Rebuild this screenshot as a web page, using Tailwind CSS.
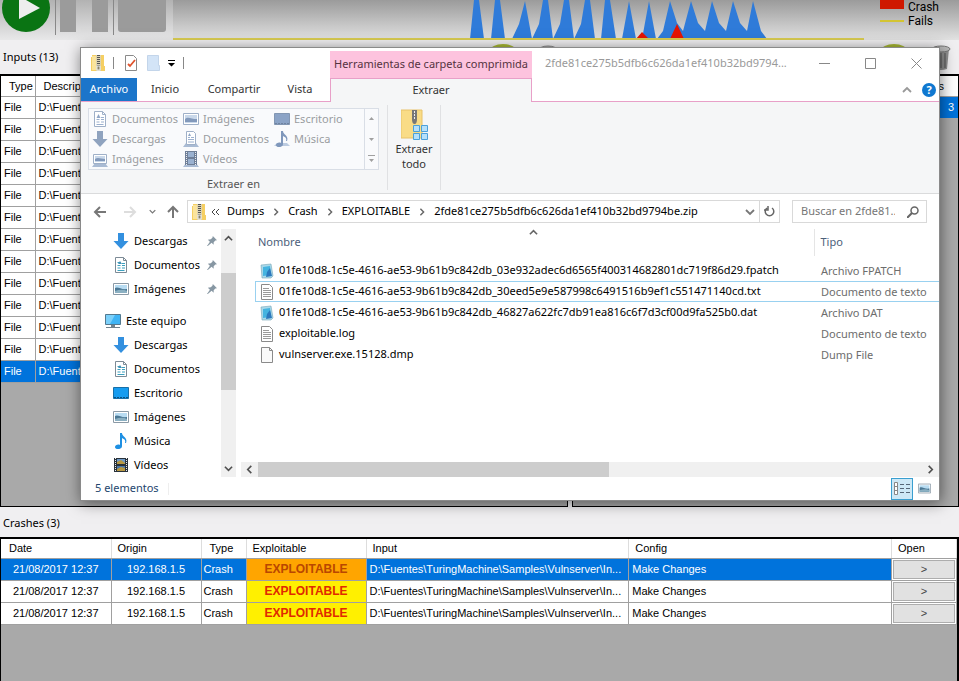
<!DOCTYPE html>
<html lang="es">
<head>
  <meta charset="UTF-8">
  <meta name="viewport" content="width=device-width, initial-scale=1.0">
  <title>TuringMachine</title>
  <script src="https://cdn.jsdelivr.net/npm/@tailwindcss/browser@4"></script>
</head>
<body class="relative flex h-screen flex-col overflow-hidden bg-[#f0eff1] font-['Liberation_Sans',sans-serif] text-[11px] text-black">

  <!-- Shared icons -->
  <svg class="hidden">
    <symbol id="zip" viewBox="0 0 14 16"><path d="M1 0h12v11h1v5H0V2h1z" fill="#f5cf63"/><path d="M1 1h4v14H1z" fill="#fbe49c"/><path d="M5 0h5v16H5z" fill="#ddd3b0"/><path d="M7.500 0v11" stroke="#555" stroke-width="3" stroke-dasharray="1 1"/><path d="M6 11h3v4H6z" fill="#8b8467" stroke="#eee"/></symbol>
    <symbol id="doc" viewBox="0 0 16 16"><path d="M2.500 .5h8l3 3v12h-11z" fill="#fff" stroke="#7d8b96"/><path d="M10.500 .5v3h3" fill="none" stroke="#7d8b96"/><path d="M4.500 8.500h3M4.500 5.500h3M9 6.500h3M9 8.500h3M4.500 11h3M9 11h3M4.500 13.500h7" stroke="#3ba0bf"/><path d="M5 7l2-3 2 3z" fill="#4591b5"/></symbol>
    <symbol id="down" viewBox="0 0 16 16"><path d="M5 0h6v8h4.500L8 16 .5 8H5z" fill="#3390df"/></symbol>
    <symbol id="pic" viewBox="0 0 16 16"><path d="M.5 2.500h15v11H.5z" fill="#fff" stroke="#8b9aa6"/><path d="M2 4h12v8H2z" fill="#b8dcf2"/><path d="M2 7c3-2 6 2 12 1v4H2z" fill="#4b7895"/><path d="M2 10c4-1 8-2 12 0v2H2z" fill="#8bb0c2"/></symbol>
    <symbol id="pc" viewBox="0 0 18 16"><path d="M1.500 1.500h15v10h-15z" fill="#3fb4f5" stroke="#53798f"/><path d="M2 2h9L6 11H2z" fill="#7bd0fa"/><path d="M7 12h4v2H7zM2 14h14v1H2z" fill="#71838e"/></symbol>
    <symbol id="desk" viewBox="0 0 16 16"><path d="M.5 2.500h15v11H.5z" fill="#169cf0" stroke="#176fa8"/><path d="M1 12.500h14" stroke="#075082" stroke-dasharray="2 1"/></symbol>
    <symbol id="note" viewBox="0 0 16 16"><path d="M7 0h2c0 4 6 4 4 10h-1c1-3-1-4-3-5v8c0 4-7 4-7 1 0-2 3-3 5-2z" fill="#1e90e3"/></symbol>
    <symbol id="film" viewBox="0 0 16 16"><path d="M1 1h14v14H1z" fill="#29323b"/><path d="M2.500 1v14M13.500 1v14" stroke="#eee" stroke-dasharray="1 1"/><path d="M4 2h8v5H4z" fill="#6f9ac7"/><path d="M4 9h8v5H4z" fill="#4b78ab"/><path d="M4 5l4-2 4 3v1H4zM4 12l4-2 4 1v3H4z" fill="#b79843"/></symbol>
    <symbol id="down-off" viewBox="0 0 16 16"><path d="M5 0h6v8h4.500L8 16 .5 8H5z" fill="#8fa3bf"/></symbol>
    <symbol id="desk-off" viewBox="0 0 16 16"><path d="M.5 2.500h15v11H.5z" fill="#8ba3c6" stroke="#8296b2"/><path d="M1 12.500h14" stroke="#6f83a0" stroke-dasharray="2 1"/></symbol>
    <symbol id="note-off" viewBox="0 0 16 16"><path d="M0 15l3-3h10l3 3z" fill="#bccbe0"/><path d="M7 0h2c0 4 6 4 4 10h-1c1-3-1-4-3-5v8c0 4-7 4-7 1 0-2 3-3 5-2z" fill="#7f97bb"/></symbol>
    <symbol id="film-off" viewBox="0 0 16 16"><path d="M0 16l3-4h10l3 4z" fill="#a9bbd4"/><path d="M2 0h12v14H2z" fill="#6f7f98"/><path d="M3.500 1v13M12.500 1v13" stroke="#eee" stroke-dasharray="1 1"/><path d="M5 1h6v5H5zM5 8h6v5H5z" fill="#9ab1d0"/></symbol>
    <symbol id="doc-off" viewBox="0 0 16 16"><path d="M2.500 .5h8l3 3v12h-11z" fill="#fff" stroke="#9fb0c8"/><path d="M10.500 .5v3h3" fill="none" stroke="#9fb0c8"/><path d="M4.500 8.500h3M9 6.500h3M9 8.500h3M4.500 11h3M9 11h3M4.500 13.500h7" stroke="#9bb0cf"/><path d="M4.500 7l2-4 2 4z" fill="#8fa5c5"/></symbol>
    <symbol id="docs-off" viewBox="0 0 16 16"><path d="M0 16l3-4h10l3 4z" fill="#a9bbd4"/><path d="M3.500 .5h7l2 2v11h-9z" fill="#fff" stroke="#9fb0c8"/><path d="M5 6.500h2M8 6.500h3M5 8.500h6M5 11h6" stroke="#9bb0cf"/><path d="M5 5l1.500-3L8 5z" fill="#8fa5c5"/></symbol>
    <symbol id="pic-off" viewBox="0 0 16 16"><path d="M.5 2.500h15v11H.5z" fill="#fff" stroke="#9fb0c8"/><path d="M2 4h12v8H2z" fill="#c9d8ea"/><path d="M2 8c3-3 6 0 12 0v3H2z" fill="#8299bb"/></symbol>
    <symbol id="pics-off" viewBox="0 0 16 16"><path d="M0 16l3-4h10l3 4z" fill="#a9bbd4"/><path d="M1.500 3.500h13v9h-13z" fill="#fff" stroke="#9fb0c8"/><path d="M3 5h10v6H3z" fill="#c9d8ea"/><path d="M3 8c3-2 6 0 10 0v2H3z" fill="#8299bb"/></symbol>
    <symbol id="pin" viewBox="0 0 12 12"><path d="M7 0l5 5-2 .5-2 2 0 3L5.500 8 1 12H0l3.500-5L1 4.500l3.500-.5 2-2z" fill="#8797a3"/></symbol>
    <symbol id="txt" viewBox="0 0 14 16"><path d="M1.500 .5h8l3 3v12h-11z" fill="#fff" stroke="#8a8a8a"/><path d="M3 4.500h6M3 6.500h8M3 8.500h8M3 10.500h8M3 12.500h8" stroke="#9a9a9a"/></symbol>
    <symbol id="blank" viewBox="0 0 14 16"><path d="M1.500 .5h8l3 3v12h-11z" fill="#fafafa" stroke="#8a8a8a"/><path d="M9.500 .5v3h3" fill="none" stroke="#8a8a8a"/></symbol>
    <symbol id="dat" viewBox="0 0 14 16"><path d="M1 2l10-1 2 12-2 2H2z" fill="#a9d9ea" stroke="#77a4b5" stroke-width=".6"/><path d="M3 4l7-1 1 9-8 1z" fill="#45b4e0"/><path d="M7 9l3-4 2 8-6 1z" fill="#2c79bd"/></symbol>
    <symbol id="chev" viewBox="0 0 10 10"><path d="M1 3l4 4 4-4" fill="none" stroke="currentColor" stroke-width="1.800"/></symbol>
  </svg>

  <!-- Toolbar and chart -->
  <header class="flex h-10 shrink-0 bg-linear-to-b from-[#9b9b9b] to-[#e2e2e2]">
    <div class="flex w-[173px] shrink-0 bg-linear-to-b from-[#b2b2b2] to-[#e8e8e9]">
      <svg class="h-9 w-[173px]" viewBox="0 0 173 36">
        <circle cx="26" cy="8" r="24" fill="#0a7413"/><path d="M19-4v23l21-11z" fill="#eee"/>
        <path d="M55.500 0v35M113.500 0v35" stroke="#888"/>
        <path d="M60 0h16v32H60zM92 0h16v32H92zM118 0h48v29q0 3-3 3h-42q-3 0-3-3z" fill="#9b9b9b"/>
      </svg>
    </div>
    <svg class="h-10 w-[691px] shrink-0" viewBox="173 0 691 40">
      <path fill="#2f7bd9" d="M470 39l4-39h5l5 39zM491 39l4-39h5l5 39zM512 39l7-15 6-23 7 38zM532 39l7-15 4-24h5l5 39zM553 39l7-15 4-24h5l5 39zM574 39l7-15 4-24h5l5 39zM601 39l4-39h5l6 39zM622 39l7-38 7 38zM642 39l7-38 7 38zM657 39l6-8 7-30 7 22 6 8 8-30 7 22 7 8 7-30 7 22 7 8 7-30 7 22 7 8 6-30 8 30 6 8z"/>
      <path fill="#e51400" d="M636 39l6-7 7 7zM670 39l7-15 7 15z"/>
      <path d="M173 38h691v2h-691z" fill="#d8cb50"/>
    </svg>
    <div class="flex flex-col pl-4 font-[Roboto,sans-serif] text-xs leading-[14px]">
      <span class="flex items-center gap-1"><i class="h-[9px] w-6 self-start bg-[#cf1800]"></i>Crash</span>
      <span class="flex items-center gap-1"><i class="h-[2px] w-6 bg-[#d3c432]"></i>Fails</span>
    </div>
  </header>

  <div class="flex h-[34px] shrink-0 items-center px-[3px] font-['Noto_Sans',sans-serif] text-[11px]">
    <h2>Inputs (13)</h2>
    <svg class="ml-auto h-7 w-[480px]" viewBox="0 0 480 28">
      <ellipse cx="27" cy="8" rx="13" ry="7" fill="#a9b934"/><ellipse cx="72" cy="8" rx="10" ry="5" fill="#bbb" stroke="#888"/>
      <ellipse cx="418" cy="8" rx="13" ry="7" fill="#a9b934"/>
      <path d="M457 6h16l-2 20q-6 2-12 0z" fill="#909090"/><path d="M461 10v15M465 10v15M469 10v15" stroke="#555"/><ellipse cx="465" cy="6" rx="9" ry="3" fill="#bbb" stroke="#777"/>
    </svg>
  </div>

  <!-- Inputs and results panels -->
  <div class="flex h-[433px] shrink-0 gap-1">
    <section class="w-[568px] shrink-0 border border-t-2 border-black bg-[#a9a9a9]">
      <table class="w-[160px] table-fixed border-collapse bg-white whitespace-nowrap">
        <thead><tr class="h-5"><th class="w-[34px] border-r border-b border-[#a0a0a0] pl-2 text-left font-normal">Type</th><th class="border-b border-[#a0a0a0] pl-2 text-left font-normal">Descript</th></tr></thead>
        <tbody id="inputs"></tbody>
      </table>
    </section>
    <section class="flex-1 border border-t-2 border-black bg-[#a9a9a9]">
      <table class="w-full border-collapse bg-white text-right">
        <thead><tr class="h-5"><th class="border-b border-[#a0a0a0] pr-[14px] font-normal">s</th></tr></thead>
        <tbody><tr class="h-[22px] bg-[#0073dc] text-white"><td class="pr-1">3</td></tr></tbody>
      </table>
    </section>
  </div>

  <h2 class="flex h-[30px] shrink-0 items-center px-[3px] pt-[2px] font-['Noto_Sans',sans-serif] text-[11px]">Crashes (3)</h2>

  <!-- Crashes -->
  <section class="flex-1 border-t-2 border-r-2 border-l border-black bg-[#a9a9a9]">
    <table class="w-full table-fixed border-collapse bg-white whitespace-nowrap">
      <thead>
        <tr class="h-[19px] text-left *:border-r *:border-b *:border-r-[#ddd] *:border-b-[#a0a0a0] *:pl-2 *:font-normal">
          <th class="w-[110px]">Date</th><th class="w-[90px] !pl-1.5">Origin</th><th class="w-[45px]">Type</th><th class="w-[120px] !pl-1.5">Exploitable</th><th class="!pl-1.5">Input</th><th class="!pl-1.5">Config</th><th class="w-[65px] !pl-1.5">Open</th>
        </tr>
      </thead>
      <tbody id="crashes"></tbody>
    </table>
  </section>

  <!-- Explorer window -->
  <main class="absolute top-[47px] right-[19px] left-20 flex h-[454px] flex-col border border-[#8a8a8a] bg-white font-['Noto_Sans',sans-serif] text-[11px] shadow-[1px_2px_14px_rgba(0,0,0,0.5)]">
    <div class="flex h-[30px] shrink-0">
      <div class="flex w-[249px] shrink-0 items-center pl-[10px]">
        <svg class="h-4 w-[14px]"><use href="#zip"/></svg>
        <i class="mr-[11px] ml-2 h-3 w-px bg-[#888]"></i>
        <button aria-label="Propiedades"><svg class="block h-4 w-3" viewBox="0 0 12 16"><path d="M.5.5h8l3 3v12H.5z" fill="#fff" stroke="#8a8a8a"/><path d="M3 9l2 2 5-6" fill="none" stroke="#e0532c" stroke-width="1.800"/></svg></button>
        <button aria-label="Nueva carpeta" class="ml-[10px]"><svg class="block h-4 w-[14px]" viewBox="0 0 14 16"><path d="M.5.5h11v10h1v5H.5z" fill="#d3e4f7" stroke="#c3d5ea"/></svg></button>
        <button aria-label="Personalizar" class="ml-[7px]"><svg class="block h-2 w-[7px]" viewBox="0 0 7 8"><path d="M0 1h7v1H0zM0 4h7L3.500 7.500z"/></svg></button>
        <i class="ml-2 h-3 w-px bg-[#888]"></i>
      </div>
      <div class="mt-[3px] flex w-[202px] shrink-0 items-center justify-center bg-[#fdc3de] text-[#55333f]">Herramientas de carpeta comprimida</div>
      <h1 class="flex-1 self-center pl-[13px] whitespace-nowrap text-[#999]">2fde81ce275b5dfb6c626da1ef410b32bd9794...</h1>
      <div class="flex w-[138px] shrink-0 items-center justify-between pr-[17px] pl-[18px] text-[#888]">
        <button aria-label="Minimizar"><svg class="block size-[11px]" viewBox="0 0 11 11"><path d="M0 5.500h11" stroke="currentColor"/></svg></button>
        <button aria-label="Maximizar"><svg class="block size-[11px]" viewBox="0 0 11 11"><path d="M.5.5h10v10H.5z" fill="none" stroke="currentColor"/></svg></button>
        <button aria-label="Cerrar"><svg class="block size-[11px]" viewBox="0 0 11 11"><path d="M.5.5l10 10M10.500.5l-10 10" stroke="currentColor"/></svg></button>
      </div>
    </div>

    <nav class="flex h-6 shrink-0 text-[#333]">
      <div class="flex w-[249px] shrink-0 border-b border-[#e8a0c8]">
        <button class="w-14 bg-[#1b75ca] text-white">Archivo</button>
        <button class="w-14">Inicio</button>
        <button class="w-[82px]">Compartir</button>
        <button class="w-[50px]">Vista</button>
      </div>
      <button class="w-[202px] shrink-0 border-x border-t border-[#e8a0c8] bg-[#f5f6f7]">Extraer</button>
      <div class="flex flex-1 items-center justify-end gap-[10px] border-b border-[#e8a0c8] pr-[3px]">
        <button aria-label="Contraer" class="text-[#999]"><svg class="block size-[10px] rotate-180"><use href="#chev"/></svg></button>
        <button aria-label="Ayuda" class="size-[14px] rounded-full bg-[#0f78d0] font-bold leading-[14px] text-white">?</button>
      </div>
    </nav>

    <!-- Ribbon -->
    <div class="flex h-[92px] shrink-0 border-b border-[#dadbdc] bg-[#f5f6f7] px-[7px]">
      <div class="flex w-[291px] flex-col items-center pt-[6px]">
        <div class="flex w-full border border-[#d9dee6] bg-[#f9fafc] text-[#9a9da1]">
          <div class="grid flex-1 grid-cols-[91px_91px_1fr] grid-rows-[20px_20px_20px] pl-[3px] *:flex *:items-center *:gap-1 *:text-left *:whitespace-nowrap">
            <button><svg class="size-4"><use href="#doc-off"/></svg>Documentos</button>
            <button><svg class="size-4"><use href="#pic-off"/></svg>Imágenes</button>
            <button><svg class="size-4"><use href="#desk-off"/></svg>Escritorio</button>
            <button><svg class="size-4"><use href="#down-off"/></svg>Descargas</button>
            <button><svg class="size-4"><use href="#docs-off"/></svg>Documentos</button>
            <button><svg class="size-4"><use href="#note-off"/></svg>Música</button>
            <button><svg class="size-4"><use href="#pics-off"/></svg>Imágenes</button>
            <button><svg class="size-4"><use href="#film-off"/></svg>Vídeos</button>
          </div>
          <div class="flex w-[14px] flex-col justify-around border-l border-[#d9dee6] pl-[3px] text-[#a0a0a0]">
            <svg class="h-2 w-[7px]" viewBox="0 0 7 8"><path d="M1 5h5L3.500 2z" fill="currentColor"/></svg>
            <svg class="h-2 w-[7px]" viewBox="0 0 7 8"><path d="M1 3h5L3.500 6z" fill="currentColor"/></svg>
            <svg class="h-2 w-[7px]" viewBox="0 0 7 8"><path d="M0 0h7v1H0zM1 4h5L3.500 7z" fill="currentColor"/></svg>
          </div>
        </div>
        <span class="mt-[5px] leading-[18px] text-[#555]">Extraer en</span>
      </div>
      <div class="my-[3px] ml-2 flex w-[54px] justify-center border-x border-[#e0e1e3]">
        <button class="flex flex-col items-center justify-start pt-1 leading-[15px] text-[#333]">
          <svg class="h-8 w-[27px] shrink-0" viewBox="0 0 27 32"><path d="M0 1h21v28H0z" fill="#f9dc86" stroke="#e8c268"/><path d="M11 1h5v9q0 5-2.500 5T11 10z" fill="#777"/><path d="M13.500 2v9" stroke="#eee" stroke-dasharray="2 1"/><path d="M12.500 16.500h6v6h-6zM20.500 16.500h6v6h-6zM12.500 24.500h6v6h-6zM20.500 24.500h6v6h-6z" fill="#b5e0fb" stroke="#4ba0da"/></svg>
          Extraer<br>todo
        </button>
      </div>
    </div>

    <!-- Address bar -->
    <div class="flex h-[35px] shrink-0 items-center pr-3 pl-3">
      <div class="flex w-[94px] shrink-0 items-center text-[#777]">
        <button aria-label="Atrás"><svg class="block size-[14px]" viewBox="0 0 14 14"><path d="M13 7H2M7 2L2 7l5 5" fill="none" stroke="currentColor" stroke-width="2"/></svg></button>
        <button aria-label="Adelante" class="ml-4 text-[#ddd]"><svg class="block size-[14px] rotate-180" viewBox="0 0 14 14"><path d="M13 7H2M7 2L2 7l5 5" fill="none" stroke="currentColor" stroke-width="2"/></svg></button>
        <button aria-label="Recientes" class="ml-3"><svg class="block size-[7px]"><use href="#chev"/></svg></button>
        <button aria-label="Subir" class="ml-[10px]"><svg class="block size-[14px] rotate-90" viewBox="0 0 14 14"><path d="M13 7H2M7 2L2 7l5 5" fill="none" stroke="currentColor" stroke-width="2"/></svg></button>
      </div>
      <div class="flex h-[23px] flex-1 items-center border border-[#d9d9d9] pl-1 whitespace-nowrap">
        <svg class="mr-[5px] h-4 w-[14px]"><use href="#zip"/></svg>
        <svg class="mr-2 size-2" viewBox="0 0 8 8"><path d="M4 1L1 4l3 3M8 1L5 4l3 3" fill="none" stroke="#444"/></svg>
        <a href="#">Dumps</a><svg class="mx-2 size-2 -rotate-90 text-[#666]"><use href="#chev"/></svg>
        <a href="#">Crash</a><svg class="mx-2 size-2 -rotate-90 text-[#666]"><use href="#chev"/></svg>
        <a href="#">EXPLOITABLE</a><svg class="mx-2 size-2 -rotate-90 text-[#666]"><use href="#chev"/></svg>
        <a href="#">2fde81ce275b5dfb6c626da1ef410b32bd9794be.zip</a>
        <button aria-label="Anteriores" class="mr-1 ml-auto text-[#777]"><svg class="block size-[10px]"><use href="#chev"/></svg></button>
        <button aria-label="Actualizar" class="flex h-full w-5 items-center justify-center border-l border-[#d9d9d9] text-[#666]"><svg class="size-[11px]" viewBox="0 0 11 11"><path d="M3 2a4.300 4.300 0 1 0 5 0M7 0v4h4" fill="none" stroke="currentColor" stroke-width="1.500" transform="matrix(-1 0 0 1 11 0)"/></svg></button>
      </div>
      <label class="ml-3 flex h-[23px] w-[135px] shrink-0 items-center border border-[#d9d9d9] pr-[7px] pl-2">
        <input type="search" aria-label="Buscar" placeholder="Buscar en 2fde81..." class="w-0 flex-1 placeholder:text-[#767676]">
        <svg class="size-3" viewBox="0 0 12 12"><circle cx="7.500" cy="4.500" r="3.500" fill="none" stroke="#666" stroke-width="1.500"/><path d="M5 7l-5 5" stroke="#666" stroke-width="2"/></svg>
      </label>
    </div>

    <div class="flex min-h-0 flex-1">
      <!-- Folder tree -->
      <aside class="w-[140px] shrink-0 leading-6">
        <ul id="quick"></ul>
        <a href="#" class="mt-2 flex items-center gap-1 pl-[23px]"><svg class="h-4 w-[18px]"><use href="#pc"/></svg>Este equipo</a>
        <ul id="places"></ul>
      </aside>
      <div class="flex w-[15px] shrink-0 flex-col items-center bg-[#f0f0f0] text-[#505050]">
        <svg class="mt-[5px] size-[9px] rotate-180"><use href="#chev"/></svg>
        <i class="mt-[30px] h-[117px] w-full bg-[#cdcdcd]"></i>
        <svg class="mt-auto mb-1 size-[9px]"><use href="#chev"/></svg>
      </div>

      <!-- File list -->
      <div class="ml-[5px] flex min-w-0 flex-1 flex-col">
        <table class="w-full table-fixed whitespace-nowrap">
          <thead>
            <tr class="h-[27px] text-left text-[#4c607a] *:font-normal"><th class="pl-[17px]">Nombre</th><th class="w-[125px] border-l border-[#e5e5e5] pl-[6px]">Tipo</th></tr>
            <tr class="h-1"></tr>
          </thead>
          <tbody id="files"></tbody>
        </table>
        <svg class="absolute top-[180px] left-[448px] size-[9px] rotate-180 text-[#666]"><use href="#chev"/></svg>
        <div class="mt-auto flex h-[15px] items-center bg-[#f0f0f0] text-[#505050]">
          <svg class="mx-[4px] size-[9px] rotate-90"><use href="#chev"/></svg>
          <i class="h-full w-[351px] bg-[#cdcdcd]"></i>
          <svg class="mr-1 ml-auto size-[9px] -rotate-90"><use href="#chev"/></svg>
        </div>
      </div>
    </div>

    <footer class="flex h-[23px] shrink-0 items-center pl-[14px] text-[#24466e]">
      <span>5 elementos</span><i class="ml-[9px] h-3 w-px bg-[#eee]"></i>
      <button aria-label="Detalles" class="ml-auto flex h-[22px] w-[22px] items-center justify-center border border-[#3a9fd0] bg-[#cde8f6]"><svg class="h-[13px] w-4" viewBox="0 0 16 13"><path d="M.5.5h3v12h-3zM.5 4.500h3M.5 8.500h3" fill="#fff" stroke="#888"/><path d="M6 2.500h4M12 2.500h4M6 6.500h4M12 6.500h4M6 10.500h4M12 10.500h4" stroke="#567"/></svg></button>
      <button aria-label="Iconos grandes" class="mr-2 ml-[5px]"><svg class="block size-[13px]"><use href="#pic"/></svg></button>
    </footer>
  </main>

  <script>
    const icon = (id, cls) => `<svg class="shrink-0 ${cls}"><use href="#${id}"/></svg>`;

    // Inputs, the last one is selected
    for (let i = 0; i < 13; i++) {
      inputs.innerHTML += `<tr class="h-[22px] ${i === 12 ? 'bg-[#0073dc] text-white' : ''}"><td class="border-r border-b border-[#a0a0a0] pl-[3px]">File</td><td class="border-b border-[#a0a0a0] pl-[3px]">D:\\Fuent</td></tr>`;
    }

    for (let i = 0; i < 3; i++) {
      crashes.innerHTML += `<tr class="h-[22px] *:border-r *:border-b *:border-[#a0a0a0] ${i === 0 ? 'bg-[#0073dc] text-white' : ''}">
        <td class="text-center">21/08/2017 12:37</td><td class="text-center">192.168.1.5</td><td class="pl-[2px]">Crash</td>
        <td class="text-center text-xs font-bold ${i === 0 ? 'bg-[#ffa500] text-[#b94700]' : 'bg-[#fff000] text-[#e02a00]'}">EXPLOITABLE</td>
        <td class="pl-[3px]">D:\\Fuentes\\TuringMachine\\Samples\\Vulnserver\\In...</td><td class="pl-[3px]">Make Changes</td>
        <td class="bg-white p-px"><button class="block h-[19px] w-full border border-[#adadad] bg-[#e1e1e1] text-[#444]">&gt;</button></td></tr>`;
    }

    const quickItems = [['down', 'Descargas'], ['doc', 'Documentos'], ['pic', 'Imágenes']];
    quickItems.forEach(([id, name]) => {
      quick.innerHTML += `<li class="flex items-center pr-1 pl-8"><a href="#" class="flex flex-1 items-center gap-[5px]">${icon(id, 'size-4')}${name}</a>${icon('pin', 'size-[10px]')}</li>`;
    });
    const placeItems = [['down', 'Descargas'], ['doc', 'Documentos'], ['desk', 'Escritorio'], ['pic', 'Imágenes'], ['note', 'Música'], ['film', 'Vídeos']];
    placeItems.forEach(([id, name]) => {
      places.innerHTML += `<li class="pl-8"><a href="#" class="flex items-center gap-[5px]">${icon(id, 'size-4')}${name}</a></li>`;
    });

    const fileItems = [
      ['dat', '01fe10d8-1c5e-4616-ae53-9b61b9c842db_03e932adec6d6565f400314682801dc719f86d29.fpatch', 'Archivo FPATCH'],
      ['txt', '01fe10d8-1c5e-4616-ae53-9b61b9c842db_30eed5e9e587998c6491516b9ef1c551471140cd.txt', 'Documento de texto'],
      ['dat', '01fe10d8-1c5e-4616-ae53-9b61b9c842db_46827a622fc7db91ea816c6f7d3cf00d9fa525b0.dat', 'Archivo DAT'],
      ['txt', 'exploitable.log', 'Documento de texto'],
      ['blank', 'vulnserver.exe.15128.dmp', 'Dump File'],
    ];
    fileItems.forEach(([id, name, type], i) => {
      files.innerHTML += `<tr class="h-[21px]"><td class="pl-[14px]"><div class="flex h-[21px] items-center gap-[5px] border-y border-l pl-1 ${i === 1 ? 'border-[#99d1f0]' : 'border-transparent'}">${icon(id, 'h-4 w-[14px]')}${name}</div></td><td><div class="h-[21px] border-y pl-[7px] leading-[19px] text-[#6d6d6d] ${i === 1 ? 'border-[#99d1f0]' : 'border-transparent'}">${type}</div></td></tr>`;
    });
  </script>
</body>
</html>
